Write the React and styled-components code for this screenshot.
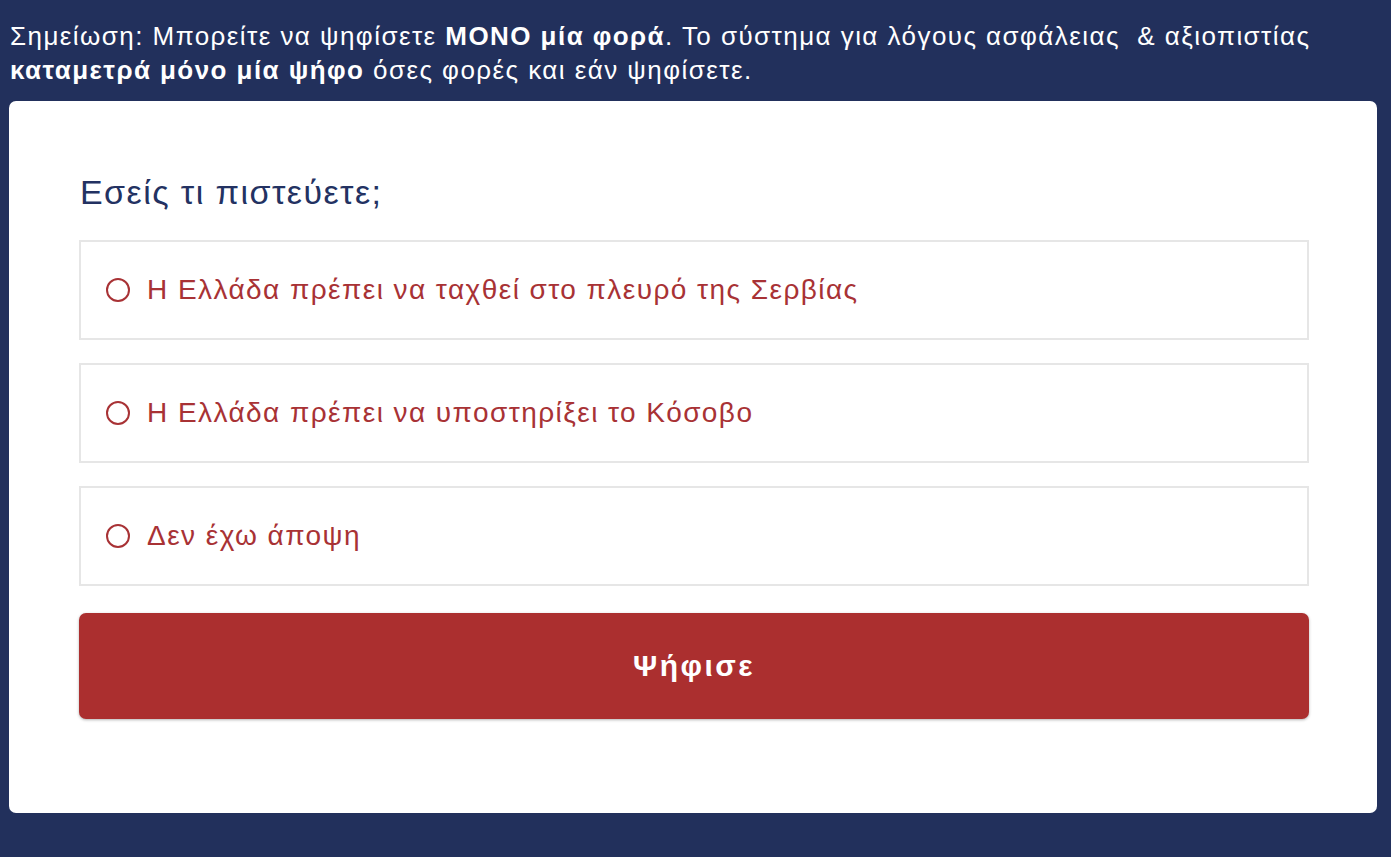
import React, { useState } from 'react';
import styled, { createGlobalStyle } from 'styled-components';

const GlobalStyle = createGlobalStyle`
  html, body {
    margin: 0;
    padding: 0;
    background: #22305c;
  }
  body {
    font-family: 'Liberation Sans', Arial, sans-serif;
    letter-spacing: 0.09em;
  }
`;

const Page = styled.div`
  min-height: 857px;
  background: #22305c;
  padding: 19px 14px 0 9px;
  box-sizing: border-box;
`;

const Notice = styled.p`
  margin: 0 0 14px 1px;
  color: #ffffff;
  font-size: 26px;
  line-height: 34px;

  strong {
    font-weight: 700;
  }
`;

const Card = styled.div`
  background: #ffffff;
  border-radius: 7px;
  padding: 69px 68px 94px 70px;
`;

const Question = styled.h2`
  margin: 0 0 26px 1px;
  color: #233262;
  font-size: 34px;
  font-weight: 400;
  line-height: 44px;
`;

const Options = styled.div`
  display: flex;
  flex-direction: column;
  gap: 23px;
  margin-bottom: 27px;
`;

const Option = styled.label`
  display: flex;
  align-items: center;
  gap: 17px;
  height: 100px;
  box-sizing: border-box;
  padding: 0 0 0 25px;
  border: 2px solid #e6e6e6;
  color: #a83235;
  font-size: 28px;
  cursor: pointer;
`;

const Radio = styled.span`
  width: 24px;
  height: 24px;
  box-sizing: border-box;
  border-radius: 50%;
  border: 2.5px solid #a83235;
  display: flex;
  align-items: center;
  justify-content: center;
  flex-shrink: 0;

  &::after {
    content: '';
    width: 12px;
    height: 12px;
    border-radius: 50%;
    background: ${({ $checked }) => ($checked ? '#a83235' : 'transparent')};
  }
`;

const VoteButton = styled.button`
  width: 100%;
  height: 106px;
  border: none;
  border-radius: 7px;
  background: #ab2f2f;
  color: #ffffff;
  font-family: 'Liberation Sans', Arial, sans-serif;
  font-weight: 700;
  font-size: 30px;
  letter-spacing: 2.5px;
  box-shadow: 0 1px 3px rgba(0, 0, 0, 0.3);
  cursor: pointer;
`;

const answers = [
  'Η Ελλάδα πρέπει να ταχθεί στο πλευρό της Σερβίας',
  'Η Ελλάδα πρέπει να υποστηρίξει το Κόσοβο',
  'Δεν έχω άποψη',
];

const App = () => {
  const [picked, setPicked] = useState(null);

  return (
    <>
      <GlobalStyle />
      <Page>
        <Notice>
          Σημείωση: Μπορείτε να ψηφίσετε <strong>ΜΟΝΟ μία φορά</strong>. Το σύστημα για λόγους ασφάλειας&nbsp; &amp; αξιοπιστίας{' '}
          <strong>καταμετρά μόνο μία ψήφο</strong> όσες φορές και εάν ψηφίσετε.
        </Notice>
        <Card>
          <Question>Εσείς τι πιστεύετε;</Question>
          <Options>
            {answers.map((a, i) => (
              <Option key={a} onClick={() => setPicked(i)}>
                <Radio $checked={picked === i} />
                {a}
              </Option>
            ))}
          </Options>
          <VoteButton>Ψήφισε</VoteButton>
        </Card>
      </Page>
    </>
  );
};

export default App;
